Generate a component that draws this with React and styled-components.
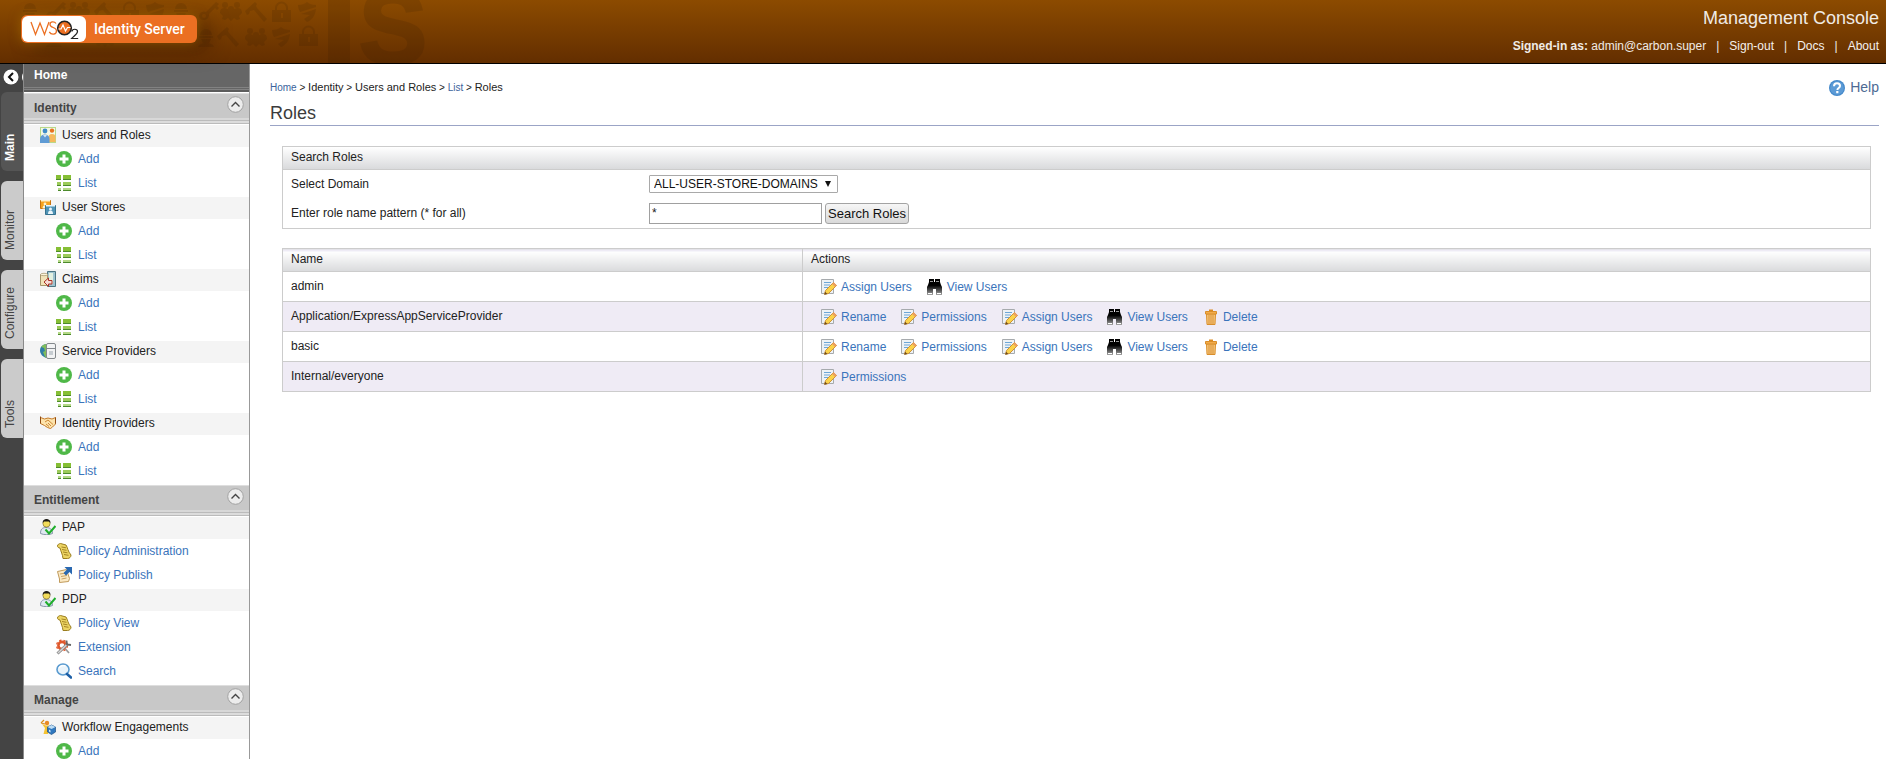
import React, { useState } from 'react'
import styled, { createGlobalStyle } from 'styled-components'


const icons = {
  add: (
    <>
      <circle cx="8" cy="8" r="8" fill="#4fb848" />
      <path d="M6.5 3.5h3v3h3v3h-3v3h-3v-3h-3v-3h3z" fill="#fff" />
    </>
  ),
  list: (
    <>
      <path d="M0 0h5v5H0zM7 0h8v5H7z" fill="#86bf35" />
      <path d="M1 7h4v4H1zM7 7h8v4H7z" fill="#9ccb5a" />
      <path d="M2 13h3v3H2zM7 13h8v3H7z" fill="#b4d987" />
      <path d="M0 4h5v1H0zM7 4h8v1H7zM1 10h4v1H1zM7 10h8v1H7zM2 15h3v1H2zM7 15h8v1H7z" fill="#4c8a2c" />
    </>
  ),
  users: (
    <>
      <rect x="0.5" y="0.5" width="15" height="15" fill="#f3f8e6" stroke="#b9d98a" />
      <circle cx="5" cy="4" r="2.4" fill="#3d8bc8" />
      <circle cx="12" cy="3.6" r="2.2" fill="#e8731f" />
      <path d="M8.500 15V11c0-3 1-4 3.500-4s3.500 1 3.500 3.500V15z" fill="#f6b95c" />
      <path d="M0 16v-4c0-3 2-4.500 4.800-4.500S9.500 9 9.500 12v4z" fill="#5f9bd4" />
      <path d="M3 8l2 2.500L7 8z" fill="#d6e8f6" />
    </>
  ),
  stores: (
    <>
      <path d="M0.500 1.500h10v8h-10z" fill="#f6a21c" stroke="#c8740f" />
      <path d="M1 1h9v1.500H1z" fill="#fff1cf" />
      <circle cx="5" cy="5" r="1.400" fill="#fff2cf" />
      <path d="M2.500 9.500c0-2.500 1-3 2.500-3s2.500 0.500 2.500 3z" fill="#fff2cf" />
      <path d="M5.500 6.500h10v9h-10z" fill="#4f93b5" stroke="#34718f" />
      <path d="M6 6h9v1.500H6z" fill="#e9f4f9" />
      <circle cx="10.500" cy="10" r="1.500" fill="#e9f5fb" />
      <path d="M8 15c0-3 1-3.500 2.500-3.500S13 12 13 15z" fill="#e9f5fb" />
    </>
  ),
  claims: (
    <>
      <path d="M7.500 0.500h8v15h-8z" fill="#9fc3cf" stroke="#4c7582" />
      <path d="M9 2h4v11H9z" fill="#e3f0e0" />
      <path d="M0.500 3.500h7v11h-7z" fill="#f1e3b9" stroke="#a4946a" />
      <ellipse cx="4" cy="3.500" rx="3.500" ry="1.200" fill="#fbf4dc" stroke="#a4946a" strokeWidth="0.700" />
      <path d="M4 11l4.500-4v2.500H12v3.500H8.500v2.500z" fill="#f7dcd6" stroke="#a93226" />
    </>
  ),
  service: (
    <>
      <path d="M7 1C2.500 1 0 4 0 7.500S3 14.500 7 15z" fill="#2f7ea6" />
      <path d="M7 1C4 1 2 2.500 1.200 4L4 5l1 3-2 1 2 5 2 1z" fill="#7fbd5a" />
      <rect x="6.500" y="0.500" width="9" height="15" rx="1.500" fill="#f2f3f4" stroke="#84898d" />
      <path d="M7 5.500h8" stroke="#84898d" />
      <rect x="9" y="8" width="4" height="4" fill="#c6ccd1" />
    </>
  ),
  handshake: (
    <>
      <path d="M0.500 2.500l4 1.500 3.500-1 4 1 3.500-1.500v6.500L12.500 12 10.500 13.500l-3-1L4.500 10.500 0.500 8.500z" fill="#fde3ab" stroke="#c47a28" />
      <path d="M5 7l3-2 5 4.500M6 9l3 2.500M8 8l3 3" fill="none" stroke="#c67d27" strokeWidth="0.900" />
      <path d="M0.500 1.500v7M15.500 2.500v6" stroke="#8f4a12" />
    </>
  ),
  person: (
    <>
      <path d="M0.500 14.500c0-4 1.500-6 5.500-6s6.500 2 6.500 6c-3 1.500-9 1.500-12 0z" fill="#dfe8f1" stroke="#8797a8" />
      <circle cx="6.500" cy="4.500" r="3.600" fill="#f2dc5b" stroke="#6d5a1a" strokeWidth="0.600" />
      <path d="M2.600 4C2.600 1 4.500 0 6.500 0s4 1 4 4L9 2.500H4z" fill="#1c1a15" />
      <path d="M5.500 10.500l3.500 4 6.500-7.500" fill="none" stroke="#1fae2b" strokeWidth="2" />
    </>
  ),
  scroll: (
    <>
      <path d="M1.500 3C1.500 1.500 3 0.700 4.500 0.500l5.500 1.500c2 3 1.500 6 5 10 0 2-1.500 3.500-3.500 3.500L7 15.500C6.500 11 5 9 4 5c-1.500 0-2.500-1-2.500-2z" fill="#ecd463" stroke="#9a7d1e" />
      <path d="M5.500 4l4.500 0.800M6 6.500l4.500 0.800M7 9l4.500 0.800M8 11.500l4.500 0.800" stroke="#9c7c1c" strokeWidth="0.900" />
    </>
  ),
  publish: (
    <>
      <path d="M1.500 4.500l9-2 3 9-1 3-9 1V12z" fill="#fbe9c4" stroke="#c09a5b" />
      <path d="M4 7l6-1M5 9.500l6-1M5.500 12l5-1" stroke="#c9a263" />
      <path d="M8.500 0H16v7.500l-2.500-2.500-3.500 3.500L7.500 6 11 2.500z" fill="#2a68b0" />
    </>
  ),
  extension: (
    <>
      <circle cx="6" cy="6.500" r="3.600" fill="none" stroke="#e0582c" strokeWidth="2.600" />
      <circle cx="6" cy="6.500" r="5.400" fill="none" stroke="#e0582c" strokeWidth="1.400" strokeDasharray="2.200 2.200" />
      <path d="M1.500 14.500l10-9.500" stroke="#8a8a8a" strokeWidth="3" />
      <path d="M2 14l9.500-9" stroke="#d5d5d5" strokeWidth="1.400" />
      <path d="M10.500 1.500l0.500 4 4 0.500" fill="none" stroke="#666" strokeWidth="1.800" />
      <path d="M9.500 10l3.500 4" stroke="#999" strokeWidth="1.600" />
    </>
  ),
  search: (
    <>
      <ellipse cx="7" cy="6.500" rx="6" ry="5.500" fill="#eaf4fb" stroke="#5a9bd0" strokeWidth="1.600" />
      <path d="M3 5c1-2 4-3 6.500-2" fill="none" stroke="#fff" strokeWidth="1.400" />
      <path d="M11 11l4 3.500" stroke="#1d5fa6" strokeWidth="2.600" strokeLinecap="round" />
    </>
  ),
  workflow: (
    <>
      <path d="M1 4l3-3M1 4l4 1" stroke="#d98e1b" strokeWidth="1.200" />
      <circle cx="7" cy="4" r="2.200" fill="#e98a24" />
      <path d="M2 5l4 1.500h3L8 15H3.500L5 9z" fill="#f5c332" />
      <path d="M7.500 8l4-2 4 2v5l-4 2.500-4-2.500z" fill="#2f78bf" stroke="#1d5085" strokeWidth="0.700" />
      <path d="M7.500 8l4 2 4-2-4-2z" fill="#bcdcf4" />
      <path d="M9 10.500v2l1.500 1v-2z" fill="#e2f0fa" />
    </>
  ),
  edit: (
    <>
      <path d="M0.500 0.500h12v14h-12z" fill="#eef2f5" stroke="#a6aaad" />
      <path d="M3 3.500h7M3 6h6M3 8.500h4" stroke="#6ea6d6" />
      <path d="M3.500 15.300l1-3.800 8-8 3 3-8 8z" fill="#fbd34a" stroke="#c98a2a" strokeWidth="0.900" />
      <path d="M11 5l1.700-1.700 3 3L14 8z" fill="#eda061" />
      <path d="M3.300 15.700l0.800-3 2.200 2.200z" fill="#6d4a1c" />
    </>
  ),
  view: (
    <>
      <defs>
        <linearGradient id="binoculars" gradientUnits="userSpaceOnUse" x1="0" y1="0" x2="0" y2="16">
          <stop offset="0.4" stopColor="#000" />
          <stop offset="1" stopColor="#a5a5a5" />
        </linearGradient>
      </defs>
      <path d="M2 0h5v3h1V0h5v3l1 3 1 2v8H9V10H6v6H0V8l1-2 1-3z" fill="url(#binoculars)" />
      <path d="M3 2.500h3M9 2.500h3" stroke="#999" />
      <path d="M1 14.500h4M10 14.500h4" stroke="#fff" />
    </>
  ),
  trash: (
    <>
      <path d="M3.500 5h9L12 15.500H4z" fill="#f7c67a" stroke="#d98e2b" />
      <path d="M6 6v9M8 6v9M10 6v9" stroke="#d9933a" />
      <path d="M2.500 2.500h11V5h-11z" fill="#f2ab4a" stroke="#d98e2b" />
      <path d="M6 0.500h4V2H6z" fill="#d98a22" />
    </>
  ),
  help: (
    <>
      <circle cx="8" cy="8" r="8" fill="#4489cb" />
      <circle cx="8" cy="8" r="6.800" fill="#5c9bd6" />
      <path d="M5 6.300C5 4.300 6.200 3.200 8 3.200s3 1 3 2.700c0 2.100-2.600 2-2.600 4" fill="none" stroke="#fff" strokeWidth="2" />
      <rect x="7.200" y="11" width="2.200" height="2.200" fill="#fff" />
    </>
  ),
}

const Icon = ({ name }) => (
  <svg width="16" height="16" viewBox="0 0 16 16" aria-hidden="true">{icons[name]}</svg>
)

const addList = [
  { icon: 'add', label: 'Add' },
  { icon: 'list', label: 'List' },
]

const menu = [
  {
    title: 'Identity',
    groups: [
      { icon: 'users', label: 'Users and Roles', items: addList },
      { icon: 'stores', label: 'User Stores', items: addList },
      { icon: 'claims', label: 'Claims', items: addList },
      { icon: 'service', label: 'Service Providers', items: addList },
      { icon: 'handshake', label: 'Identity Providers', items: addList },
    ],
  },
  {
    title: 'Entitlement',
    groups: [
      {
        icon: 'person',
        label: 'PAP',
        items: [
          { icon: 'scroll', label: 'Policy Administration' },
          { icon: 'publish', label: 'Policy Publish' },
        ],
      },
      {
        icon: 'person',
        label: 'PDP',
        items: [
          { icon: 'scroll', label: 'Policy View' },
          { icon: 'extension', label: 'Extension' },
          { icon: 'search', label: 'Search' },
        ],
      },
    ],
  },
  {
    title: 'Manage',
    groups: [
      { icon: 'workflow', label: 'Workflow Engagements', items: [{ icon: 'add', label: 'Add' }] },
    ],
  },
]

const rename = { icon: 'edit', label: 'Rename' }
const permissions = { icon: 'edit', label: 'Permissions' }
const assign = { icon: 'edit', label: 'Assign Users' }
const view = { icon: 'view', label: 'View Users' }
const remove = { icon: 'trash', label: 'Delete' }

const roles = [
  { name: 'admin', actions: [assign, view] },
  { name: 'Application/ExpressAppServiceProvider', actions: [rename, permissions, assign, view, remove] },
  { name: 'basic', actions: [rename, permissions, assign, view, remove] },
  { name: 'Internal/everyone', actions: [permissions] },
]

const tabs = ['Main', 'Monitor', 'Configure', 'Tools']

// faint security symbols behind the logo
const HeaderArt = () => (
  <Art width="460" height="63" viewBox="0 0 460 63" aria-hidden="true">
    <defs>
      <g id="guard">
        <path d="M2 8a6 6 0 0 1 12 0zM1 9h14v2H1zM3 12h10l-2 4H5zM0 20c1-3 4-4 8-4s7 1 8 4z" />
      </g>
      <g id="key">
        <path d="M0 14a5 5 0 0 1 7-4L17 0l3 2-2 2 2 2-2 2-2-2-6 6a5 5 0 0 1-5 6 5 5 0 0 1-5-4zm3 0a2 2 0 1 0 4 0 2 2 0 0 0-4 0z" />
      </g>
      <g id="people">
        <circle cx="5" cy="4" r="3" /><circle cx="17" cy="4" r="3" />
        <path d="M0 12c0-4 2-5 5-5l3 1a3 3 0 1 1 6 0l3-1c3 0 5 1 5 5l-3 3 1 3-3 1-3-2-3 3-3-3-3 2-3-1 1-3z" />
      </g>
      <g id="gavel">
        <path d="M0 9L10 0l2 2-1 2 1 2 10 11-3 3L9 8 5 9l-1 3-2 1z" />
      </g>
      <g id="lock">
        <path d="M0 8h3V6a6 6 0 0 1 13 0v2h3v12H0zm5 0h9V6a4 4 0 0 0-9 0zm4 3v5h2v-5z" fillRule="evenodd" />
      </g>
      <g id="shield">
        <path d="M0 3c4 0 7-1 9-3 2 2 5 3 9 3v2L2 10C1 8 0 6 0 3zM3 12l15-5c-1 7-4 11-9 13l-3-3 6-4z" />
      </g>
    </defs>
    <g fill="#2b1600" opacity="0.13">
      <use href="#guard" x="22" y="1" /><use href="#key" x="46" y="2" /><use href="#people" x="68" y="1" />
      <use href="#gavel" x="94" y="2" /><use href="#lock" x="120" y="2" /><use href="#shield" x="146" y="2" />
      <use href="#guard" x="173" y="1" /><use href="#key" x="199" y="2" /><use href="#people" x="220" y="1" />
      <use href="#gavel" x="245" y="2" /><use href="#lock" x="272" y="2" /><use href="#shield" x="298" y="2" />
      <use href="#guard" x="46" y="27" /><use href="#people" x="94" y="27" /><use href="#guard" x="198" y="27" />
      <use href="#gavel" x="217" y="27" /><use href="#people" x="245" y="27" /><use href="#shield" x="272" y="27" />
      <use href="#lock" x="299" y="26" />
    </g>
    <rect x="328" width="22" height="63" fill="#2b1600" opacity="0.14" />
    <text x="359" y="63" fontFamily="Liberation Sans" fontWeight="bold" fontSize="102" fill="#2b1600" stroke="#2b1600" strokeWidth="3" opacity="0.14">S</text>
  </Art>
)

export default function App() {
  const [domain, setDomain] = useState('ALL-USER-STORE-DOMAINS')
  const [pattern, setPattern] = useState('*')
  const [tab, setTab] = useState('Main')

  return (
    <Page>
      <GlobalStyle />
      <Header>
        <HeaderArt />
        <Logo href="#">
          <LogoMark>
            <svg width="64" height="26" viewBox="0 0 64 26" aria-label="WSO2">
              <path d="M9 6l4.500 12.500L18 7l4.500 11.500L27 6" fill="none" stroke="#eb6f22" strokeWidth="1.300" />
              <path d="M34 7.500c-1.500-2.300-6-2.300-6 0.900 0 3.600 6.500 2.600 6.500 6.300 0 4.300-5.500 4.300-7.200 1.200" fill="none" stroke="#eb6f22" strokeWidth="1.300" />
              <circle cx="42.500" cy="12" r="6.800" fill="#eb6f22" stroke="#222" strokeWidth="1.600" />
              <path d="M36.500 13h2.500l2-4 2.500 6 2-3.500h3" fill="none" stroke="#fff" strokeWidth="1.200" />
              <path d="M50 15.500c0-3 5.500-3 5.500 0 0 2.500-3 4-5.800 7h6.500" fill="none" stroke="#222" strokeWidth="1.200" />
            </svg>
          </LogoMark>
          <LogoText>Identity Server</LogoText>
        </Logo>
        <Account>
          <ConsoleName>Management Console</ConsoleName>
          <AccountLinks>
            <span><b>Signed-in as:</b> admin@carbon.super</span>
            <i>|</i>
            <a href="#">Sign-out</a>
            <i>|</i>
            <a href="#">Docs</a>
            <i>|</i>
            <a href="#">About</a>
          </AccountLinks>
        </Account>
      </Header>
      <Body>
        <TabStrip>
          <Collapse aria-label="Hide menu">
            <svg width="23" height="16" viewBox="0 0 23 16">
              <circle cx="11" cy="8" r="7.500" fill="#fff" />
              <circle cx="29" cy="8" r="7" fill="#fff" />
              <path d="M13 4L9 8l4 4" fill="none" stroke="#111" strokeWidth="2" />
            </svg>
          </Collapse>
          {tabs.map(t => (
            <Tab key={t} $active={t === tab} onClick={() => setTab(t)}>{t}</Tab>
          ))}
        </TabStrip>
        <Menu>
          <HomeLink href="#">Home</HomeLink>
          {menu.map(section => (
            <section key={section.title}>
              <SectionHead>
                <SectionTitle>{section.title}</SectionTitle>
                <Toggle aria-label={'Collapse ' + section.title}>
                  <svg width="17" height="17" viewBox="0 0 17 17">
                    <circle cx="8.500" cy="8.500" r="7.800" fill="#ececec" stroke="#a2a2a2" />
                    <path d="M4.500 10.500l4-4 4 4" fill="none" stroke="#444" strokeWidth="1.400" />
                  </svg>
                </Toggle>
              </SectionHead>
              {section.groups.map(group => (
                <Group key={group.label}>
                  <GroupTitle><Icon name={group.icon} />{group.label}</GroupTitle>
                  {group.items.map(item => (
                    <MenuLink href="#" key={item.label}><Icon name={item.icon} />{item.label}</MenuLink>
                  ))}
                </Group>
              ))}
            </section>
          ))}
        </Menu>
        <Content>
          <TopLine>
            <Crumbs>
              <a href="#">Home</a> &gt; <span>Identity</span> &gt; <span>Users and Roles</span> &gt; <a href="#">List</a> &gt; <span>Roles</span>
            </Crumbs>
            <Help href="#"><Icon name="help" />Help</Help>
          </TopLine>
          <Title>Roles</Title>
          <WorkArea>
            <SearchPanel onSubmit={e => e.preventDefault()}>
              <PanelHead>Search Roles</PanelHead>
              <Fields>
                <label htmlFor="domain">Select Domain</label>
                <SelectBox>
                  <select id="domain" value={domain} onChange={e => setDomain(e.target.value)}>
                    <option>ALL-USER-STORE-DOMAINS</option>
                    <option>PRIMARY</option>
                  </select>
                  <svg width="6" height="6" viewBox="0 0 6 6"><path d="M0 0h6L3 6z" fill="#111" /></svg>
                </SelectBox>
                <label htmlFor="pattern">Enter role name pattern (* for all)</label>
                <PatternRow>
                  <PatternInput id="pattern" value={pattern} onChange={e => setPattern(e.target.value)} />
                  <SearchButton type="submit">Search Roles</SearchButton>
                </PatternRow>
              </Fields>
            </SearchPanel>
            <RoleTable>
              <thead>
                <tr>
                  <th>Name</th>
                  <th>Actions</th>
                </tr>
              </thead>
              <tbody>
                {roles.map(role => (
                  <tr key={role.name}>
                    <td>{role.name}</td>
                    <td>
                      <Actions>
                        {role.actions.map(action => (
                          <ActionLink href="#" key={action.label}><Icon name={action.icon} />{action.label}</ActionLink>
                        ))}
                      </Actions>
                    </td>
                  </tr>
                ))}
              </tbody>
            </RoleTable>
          </WorkArea>
        </Content>
      </Body>
    </Page>
  )
}


const GlobalStyle = createGlobalStyle`
  * {
    box-sizing: border-box;
  }
  body {
    margin: 0;
    background: #fff;
    color: #222;
    font-family: "Liberation Sans", Arial, sans-serif;
    font-size: 12px;
    line-height: 16px;
  }
  a {
    color: #3a74bb;
    text-decoration: none;
  }
  button, input, select {
    font-family: inherit;
  }
  svg {
    display: block;
    flex: none;
  }
`

const Page = styled.div`
  display: flex;
  flex-direction: column;
  height: 100vh;
  overflow: hidden;
`

const Header = styled.header`
  position: relative;
  display: flex;
  justify-content: space-between;
  align-items: flex-start;
  flex: none;
  height: 64px;
  padding: 0 7px 0 21px;
  border-bottom: 1px solid #000;
  background: linear-gradient(#8c4b00, #632e00);
  color: #f0ebe5;
`

const Art = styled.svg`
  position: absolute;
  left: 0;
  top: 0;
`

const Logo = styled.a`
  position: relative;
  display: flex;
  align-items: center;
  height: 28px;
  margin-top: 15px;
  padding: 0 12px 0 1px;
  border-radius: 6px;
  background: #eb6f22;
  box-shadow: 0 0 12px rgba(190, 130, 0, 0.5), 12px 6px 20px rgba(50, 20, 0, 0.5);
`

const LogoMark = styled.span`
  width: 64px;
  height: 26px;
  border-radius: 6px;
  background: #fff;
`

const LogoText = styled.span`
  margin-left: 8px;
  color: #fff;
  font-family: Roboto, "Liberation Sans", sans-serif;
  font-size: 14px;
  font-weight: 500;
`

const Account = styled.div`
  display: flex;
  flex-direction: column;
  align-items: flex-end;
  gap: 9px;
  padding-top: 8px;
`

const ConsoleName = styled.div`
  font-size: 18px;
  line-height: 20px;
`

const AccountLinks = styled.div`
  display: flex;
  gap: 10px;
  line-height: 18px;

  a {
    color: #f5f1ec;
  }
  i {
    font-style: normal;
  }
`

const Body = styled.div`
  display: flex;
  flex: 1;
  min-height: 0;
`

const TabStrip = styled.nav`
  display: flex;
  flex-direction: column;
  flex: none;
  gap: 10px;
  width: 24px;
  padding-top: 5px;
  border-right: 1px solid #8a8a8a;
  background: #444;
`

const Collapse = styled.button`
  height: 16px;
  margin-bottom: -3px;
  padding: 0;
  border: 0;
  background: none;
`

const Tab = styled.button`
  display: flex;
  align-items: center;
  height: 79px;
  margin-left: 1px;
  padding: 10px 0 10px 4px;
  border: 0;
  border-radius: 0 6px 6px 0;
  background: ${p => (p.$active ? '#555' : '#cbcbcb')};
  color: ${p => (p.$active ? '#fff' : '#444')};
  font-size: 12px;
  font-weight: ${p => (p.$active ? 'bold' : 'normal')};
  line-height: 16px;
  writing-mode: vertical-rl;
  transform: rotate(180deg);
`

const Menu = styled.nav`
  flex: none;
  width: 226px;
  overflow: hidden;
  border-right: 1px solid #999;
`

const HomeLink = styled.a`
  display: block;
  height: 29px;
  padding: 3px 10px;
  border-bottom: 1px solid #fff;
  background: linear-gradient(#666 23px, #828282 23px, #828282 24px, #666 24px, #666 25px, #828282 25px, #828282 26px, #5c5c5c 26px);
  color: #fff;
  font-weight: bold;
`

const SectionHead = styled.div`
  display: flex;
  justify-content: space-between;
  height: 32px;
  padding: 2px 5px 0 10px;
  border-top: 1px solid #dedede;
  border-bottom: 1px solid #fff;
  background: linear-gradient(#c8c8c8 24px, #d8d8d8 24px, #d8d8d8 26px, #bbb 26px, #bbb 27px, #dcdcdc 27px, #dcdcdc 29px, #bbb 29px);
`

const SectionTitle = styled.h2`
  margin: 4px 0 0;
  color: #444;
  font-size: 12px;
  line-height: 16px;
`

const Toggle = styled.button`
  height: 17px;
  padding: 0;
  border: 0;
  background: none;
`

const Group = styled.div`
  padding-bottom: 2px;
`

const GroupTitle = styled.div`
  display: flex;
  align-items: center;
  gap: 6px;
  height: 22px;
  padding: 0 16px 2px;
  background: #f4f4f4;
`

const MenuLink = styled.a`
  display: flex;
  align-items: center;
  gap: 6px;
  height: 24px;
  padding-left: 32px;
`

const Content = styled.main`
  flex: 1;
  min-width: 0;
  padding: 14px 7px 0 20px;
`

const TopLine = styled.div`
  display: flex;
  justify-content: space-between;
`

const Crumbs = styled.div`
  padding-top: 1px;
  font-size: 10px;

  a {
    color: #3a639c;
  }
  span {
    font-size: 11px;
  }
`

const Help = styled.a`
  display: flex;
  gap: 5px;
  padding-top: 2px;
  color: #4d6a94;
  font-size: 14px;
  line-height: 14px;
`

const Title = styled.h1`
  margin: 0;
  padding: 7px 0 2px;
  border-bottom: 1px solid #9ba4c6;
  color: #3c3c3c;
  font-size: 18px;
  font-weight: normal;
  line-height: 20px;
`

const WorkArea = styled.div`
  display: flex;
  flex-direction: column;
  gap: 19px;
  padding: 20px 8px 0 12px;
`

const SearchPanel = styled.form`
  border: 1px solid #ccc;
`

const PanelHead = styled.div`
  height: 23px;
  padding: 2px 8px;
  border-bottom: 1px solid #ccc;
  background: linear-gradient(#fff, #d9dadc);
`

const Fields = styled.div`
  display: grid;
  grid-template-columns: 358px 1fr;
  grid-template-rows: 28px 30px;
  align-items: center;
  padding-left: 8px;
`

const SelectBox = styled.div`
  position: relative;
  width: 189px;

  select {
    display: block;
    width: 100%;
    height: 18px;
    padding: 0 4px;
    border: 1px solid #a9a9a9;
    border-radius: 1px;
    background: #fff;
    color: #111;
    font-size: 12px;
    appearance: none;
  }
  svg {
    position: absolute;
    right: 7px;
    top: 6px;
    pointer-events: none;
  }
`

const PatternRow = styled.div`
  display: flex;
  gap: 3px;
`

const PatternInput = styled.input`
  width: 173px;
  height: 21px;
  padding: 1px 2px;
  border: 1px solid #a0a0a0;
  color: #222;
  font-size: 12px;
`

const SearchButton = styled.button`
  height: 21px;
  padding: 0 2px;
  border: 1px solid #a3a3a3;
  border-radius: 3px;
  background: linear-gradient(#f6f6f6, #d9d9d9);
  color: #111;
  font-size: 13px;
`

const RoleTable = styled.table`
  width: 100%;
  border-collapse: collapse;
  table-layout: fixed;

  th, td {
    padding: 0 8px;
    border: 1px solid #ccc;
    text-align: left;
  }
  th {
    height: 23px;
    padding-bottom: 3px;
    background: linear-gradient(#eeebf5 2px, #fff 2px, #d9dadc);
    font-weight: normal;
  }
  th:first-child {
    width: 520px;
  }
  td {
    height: 30px;
  }
  td:first-child {
    padding-bottom: 1px;
  }
  tbody tr:nth-child(even) {
    background: #efebf5;
  }
`

const Actions = styled.div`
  display: flex;
  gap: 15px;
  padding-left: 10px;
`

const ActionLink = styled.a`
  display: flex;
  gap: 4px;
`
